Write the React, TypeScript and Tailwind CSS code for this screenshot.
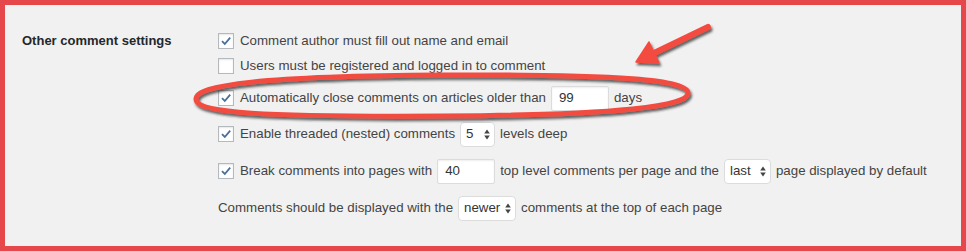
import type { ReactNode } from "react";

function Checkbox({ checked }: { checked: boolean }) {
  return (
    <span className="mr-[6px] flex h-4 w-4 shrink-0 items-center justify-center border border-[#b4b9be] bg-white shadow-[inset_0_1px_2px_rgba(0,0,0,0.1)]">
      {checked && (
        <svg width="12" height="12" viewBox="0 0 12 12">
          <path d="M2 6.2 L4.8 9 L10.2 2.6" fill="none" stroke="#4a6f98" strokeWidth="1.8" />
        </svg>
      )}
    </span>
  );
}

function TextBox({ value, width }: { value: string; width: string }) {
  return (
    <span
      className={`mx-[5px] flex h-[25px] ${width} shrink-0 items-center rounded-[2px] border border-[#dcdcdc] bg-white pl-[7px] text-[#333] shadow-[inset_0_1px_2px_rgba(0,0,0,0.07)]`}
    >
      {value}
    </span>
  );
}

function Select({ value, width }: { value: string; width: string }) {
  return (
    <span
      className={`mx-[5px] flex h-[25px] ${width} shrink-0 items-center justify-between rounded-[4px] border border-[#dcdcdc] bg-white pl-[5px] pr-[4px] text-[#333]`}
    >
      <span>{value}</span>
      <svg width="6" height="11" viewBox="0 0 6 11">
        <path d="M3 0.5 L5.8 4.5 L0.2 4.5 Z" fill="#444" />
        <path d="M3 10.5 L5.8 6.5 L0.2 6.5 Z" fill="#444" />
      </svg>
    </span>
  );
}

function Row({ className, children }: { className: string; children: ReactNode }) {
  return <div className={`flex items-center whitespace-nowrap ${className}`}>{children}</div>;
}

export default function App() {
  return (
    <div className="relative h-[251px] w-[966px]">
      <div className="h-full w-full border-[5px] border-[#e6474a] bg-[#f1f1f1] font-['Liberation_Sans',Arial,sans-serif] text-[13.3px] text-[#444]">
        <div className="flex pl-[17px] pt-[24px]">
          <div className="flex h-6 w-[196px] items-center text-[13px] font-bold text-[#23282d]">
            Other comment settings
          </div>

          <div className="flex flex-col">
            <Row className="h-6">
              <Checkbox checked />
              Comment author must fill out name and email
            </Row>
            <Row className="mt-px h-6">
              <Checkbox checked={false} />
              Users must be registered and logged in to comment
            </Row>
            <Row className="mt-[6px] h-7">
              <Checkbox checked />
              Automatically close comments on articles older than
              <TextBox value="99" width="w-[58px]" />
              days
            </Row>
            <Row className="mt-2 h-7">
              <Checkbox checked />
              Enable threaded (nested) comments
              <Select value="5" width="w-[35px]" />
              levels deep
            </Row>
            <Row className="mt-[9px] h-7">
              <Checkbox checked />
              Break comments into pages with
              <TextBox value="40" width="w-[58px]" />
              top level comments per page and the
              <Select value="last" width="w-[47px]" />
              page displayed by default
            </Row>
            <Row className="mt-[9px] h-7">
              Comments should be displayed with the
              <Select value="newer" width="w-[58px]" />
              comments at the top of each page
            </Row>
          </div>
        </div>
      </div>

      {/* annotation: hand-drawn loop + arrow over the settings */}
      <svg
        className="pointer-events-none absolute inset-0"
        width="966"
        height="251"
        viewBox="0 0 966 251"
      >
        <defs>
          <filter id="shadow" x="-10%" y="-50%" width="120%" height="200%">
            <feDropShadow dx="1.5" dy="2.5" stdDeviation="1.2" floodColor="#222" floodOpacity="0.7" />
          </filter>
        </defs>
        <path
          d="M196 99 C196 85 262 76 442 75 C622 74 688 80 688 93 C688 106 622 115 442 116 C262 117 196 113 196 99 Z"
          fill="none"
          stroke="#f24c41"
          strokeWidth="5"
          filter="url(#shadow)"
        />
        <g filter="url(#shadow)">
          <line x1="708" y1="27" x2="650" y2="55" stroke="#f44b40" strokeWidth="6" strokeLinecap="round" />
          <path d="M636 62 L649 42 L659 63 Z" fill="#f44b40" stroke="#f44b40" strokeWidth="1.5" strokeLinejoin="round" />
        </g>
      </svg>
    </div>
  );
}
